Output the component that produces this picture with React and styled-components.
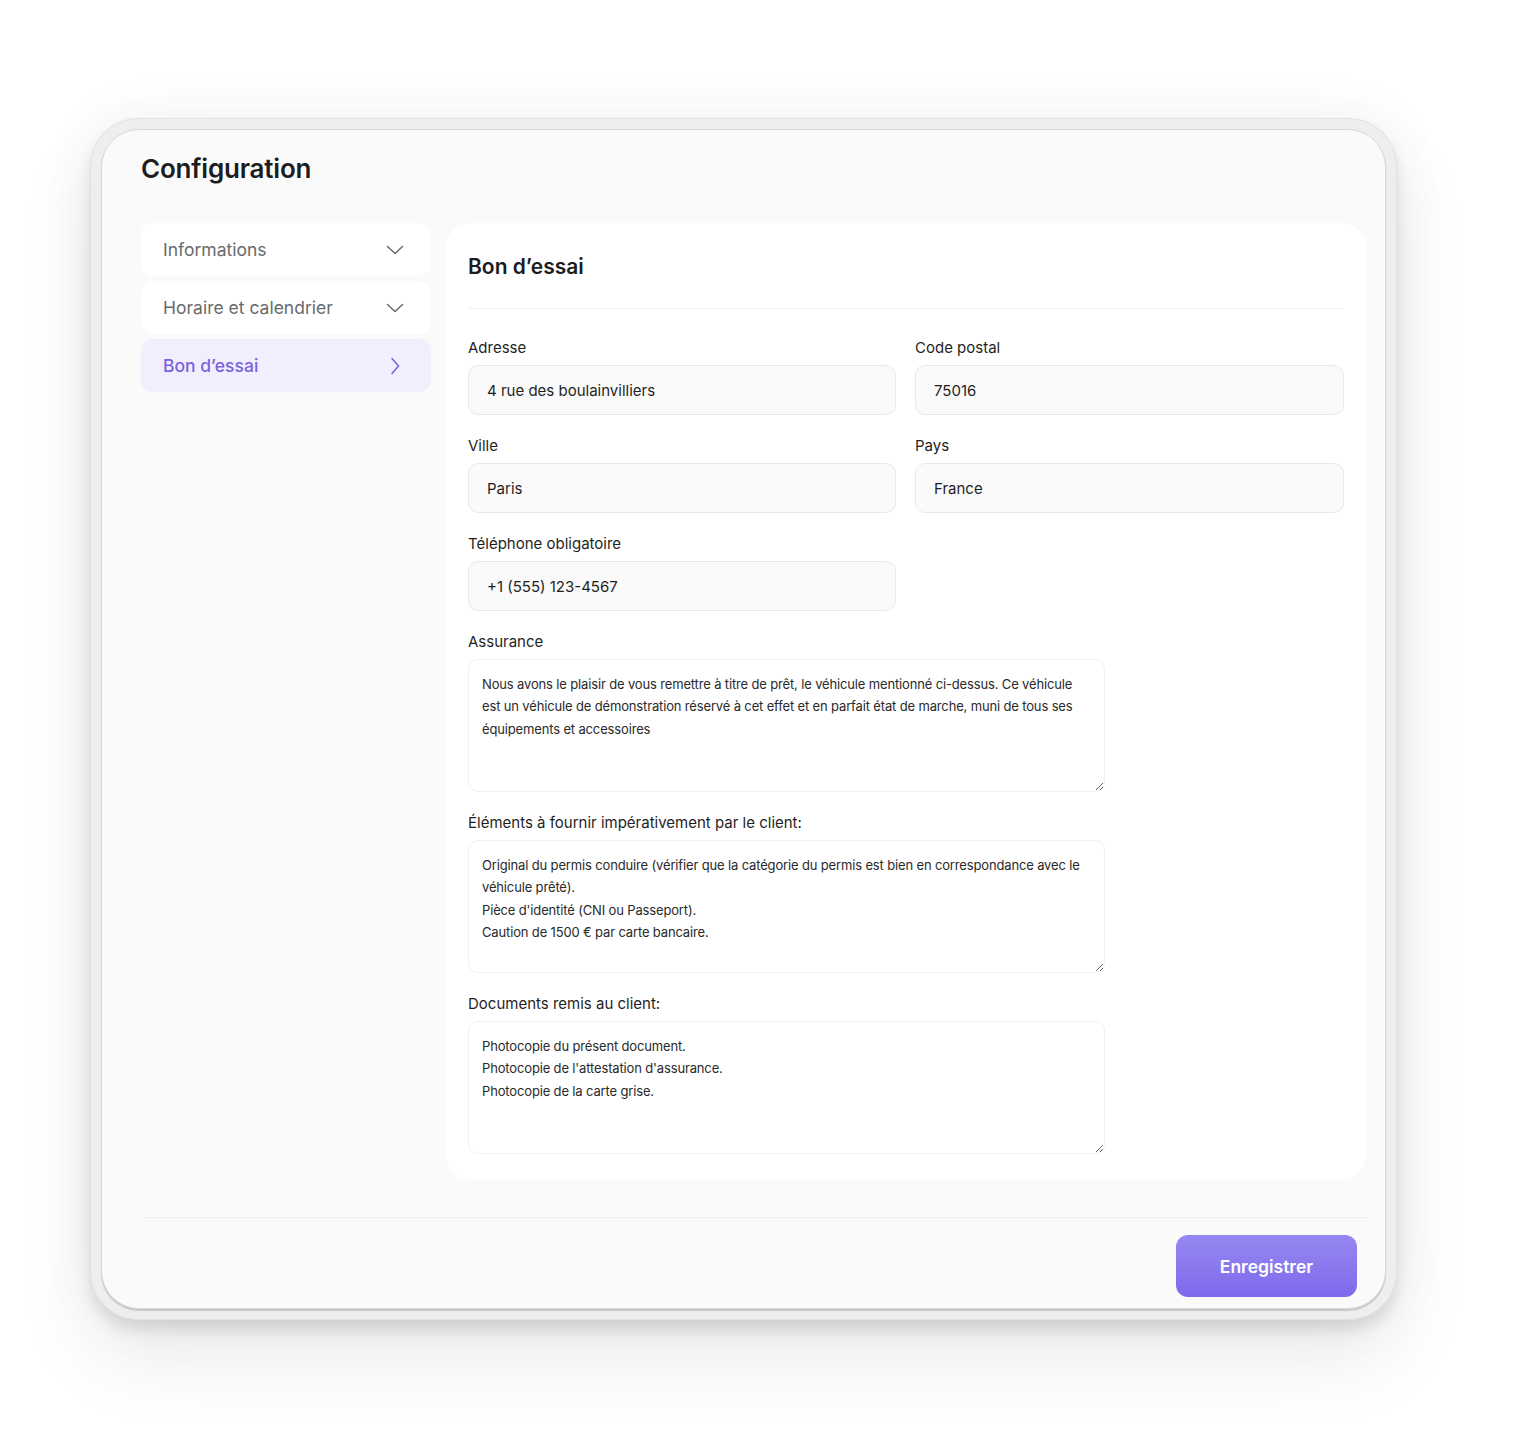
import styled, { createGlobalStyle } from "styled-components";

const GlobalStyle = createGlobalStyle`
  body {
    margin: 0;
    background: #ffffff;
    font-family: Inter, "Noto Sans", sans-serif;
    color: #1f1f1f;
  }
`;

const Page = styled.div`
  min-height: 1440px;
  padding: 118px 0 0 90px;
  box-sizing: border-box;
`;

const Frame = styled.div`
  width: 1307px;
  box-sizing: border-box;
  padding: 10px;
  border-radius: 48px;
  background: #eeeeee;
  border: 1px solid #e2e2e2;
  box-shadow: 0 10px 14px rgba(0, 0, 0, 0.1), 0 40px 80px rgba(0, 0, 0, 0.08),
    0 0 60px rgba(0, 0, 0, 0.05);
`;

const Card = styled.div`
  height: 1180px;
  box-sizing: border-box;
  padding: 23px 18px 12px 39px;
  border-radius: 38px;
  background: #fafafa;
  border: 1px solid #d8d8d8;
  box-shadow: 0 2px 1px #c6c6c6;
  display: flex;
  flex-direction: column;
`;

const Title = styled.h1`
  margin: 0;
  font-size: 26px;
  line-height: 32px;
  font-weight: 600;
  color: #1d1d1d;
  letter-spacing: -0.2px;
`;

const Body = styled.div`
  display: flex;
  gap: 15px;
  margin-top: 38px;
  align-items: flex-start;
`;

const Sidebar = styled.nav`
  width: 290px;
  flex-shrink: 0;
  display: flex;
  flex-direction: column;
  gap: 5px;
`;

const NavItem = styled.div`
  height: 53px;
  display: flex;
  align-items: center;
  justify-content: space-between;
  padding: 0 26px 0 22px;
  border-radius: 12px;
  background: ${(p) => (p.$active ? "#f1eefd" : "#ffffff")};
  color: ${(p) => (p.$active ? "#7b62dd" : "#6a6a6a")};
  font-size: 17.5px;
  font-weight: ${(p) => (p.$active ? 500 : 400)};
  svg {
    stroke: ${(p) => (p.$active ? "#7b62dd" : "#6a6a6a")};
  }
`;

const Panel = styled.section`
  width: 920px;
  flex-shrink: 0;
  box-sizing: border-box;
  padding: 30px 22px 26px 22px;
  border-radius: 24px;
  background: #ffffff;
`;

const PanelTitle = styled.h2`
  margin: 0;
  font-size: 21px;
  line-height: 28px;
  font-weight: 600;
  color: #1d1d1d;
`;

const Divider = styled.div`
  height: 1px;
  background: #efefef;
  margin: ${(p) => p.$margin || "0"};
`;

const Grid = styled.div`
  display: grid;
  grid-template-columns: 428px 429px;
  column-gap: 19px;
  row-gap: 21px;
`;

const Field = styled.label`
  display: flex;
  flex-direction: column;
  gap: 7px;
  margin-top: ${(p) => p.$top || "0"};
`;

const Label = styled.span`
  font-size: 15px;
  line-height: 20px;
  color: #1f1f1f;
`;

const Input = styled.input`
  height: 50px;
  box-sizing: border-box;
  padding: 0 18px;
  border-radius: 10px;
  border: 1px solid #e9e9e9;
  background: #fafafa;
  font-family: Inter, "Noto Sans", sans-serif;
  font-size: 15px;
  color: #1f1f1f;
  outline: none;
`;

const TextArea = styled.textarea`
  width: 637px;
  height: 133px;
  box-sizing: border-box;
  padding: 13px 13px;
  border-radius: 10px;
  border: 1px solid #f0f0f0;
  background: #ffffff;
  font-family: Inter, "Noto Sans", sans-serif;
  font-size: 13px;
  line-height: 22.4px;
  letter-spacing: -0.15px;
  color: #2a2a2a;
  outline: none;
  resize: vertical;
  overflow: hidden;
`;

const Footer = styled.div`
  margin-top: 37px;
  display: flex;
  flex-direction: column;
`;

const Actions = styled.div`
  display: flex;
  justify-content: flex-end;
  padding: 17px 10px 0 0;
`;

const SaveButton = styled.button`
  width: 181px;
  height: 62px;
  border: none;
  border-radius: 12px;
  background: linear-gradient(180deg, #9688f1 0%, #7e69ec 100%);
  color: #ffffff;
  font-family: Inter, "Noto Sans", sans-serif;
  font-size: 17.5px;
  font-weight: 600;
  cursor: pointer;
`;

const ChevronDown = () => (
  <svg width="20" height="20" viewBox="0 0 20 20" fill="none" strokeWidth="1.5" strokeLinecap="round" strokeLinejoin="round">
    <path d="M2.5 6.5 10 13.5l7.5-7" />
  </svg>
);

const ChevronRight = () => (
  <svg width="20" height="20" viewBox="0 0 20 20" fill="none" strokeWidth="1.5" strokeLinecap="round" strokeLinejoin="round">
    <path d="M7 2.5 13.5 10 7 17.5" />
  </svg>
);

const navItems = [
  { label: "Informations", active: false },
  { label: "Horaire et calendrier", active: false },
  { label: "Bon d’essai", active: true },
];

const textFields = [
  { label: "Adresse", value: "4 rue des boulainvilliers" },
  { label: "Code postal", value: "75016" },
  { label: "Ville", value: "Paris" },
  { label: "Pays", value: "France" },
  { label: "Téléphone obligatoire", value: "+1 (555) 123-4567" },
];

const areas = [
  {
    label: "Assurance",
    value:
      "Nous avons le plaisir de vous remettre à titre de prêt, le véhicule mentionné ci-dessus. Ce véhicule est un véhicule de démonstration réservé à cet effet et en parfait état de marche, muni de tous ses équipements et accessoires",
  },
  {
    label: "Éléments à fournir impérativement par le client:",
    value:
      "Original du permis conduire (vérifier que la catégorie du permis est bien en correspondance avec le véhicule prêté).\nPièce d'identité (CNI ou Passeport).\nCaution de 1500 € par carte bancaire.",
  },
  {
    label: "Documents remis au client:",
    value:
      "Photocopie du présent document.\nPhotocopie de l'attestation d'assurance.\nPhotocopie de la carte grise.",
  },
];

export default function App() {
  return (
    <Page>
      <GlobalStyle />
      <Frame>
        <Card>
          <Title>Configuration</Title>
          <Body>
            <Sidebar>
              {navItems.map((item) => (
                <NavItem key={item.label} $active={item.active}>
                  {item.label}
                  {item.active ? <ChevronRight /> : <ChevronDown />}
                </NavItem>
              ))}
            </Sidebar>
            <Panel>
              <PanelTitle>Bon d’essai</PanelTitle>
              <Divider $margin="27px 0 29px" />
              <Grid>
                {textFields.map((f) => (
                  <Field key={f.label}>
                    <Label>{f.label}</Label>
                    <Input readOnly defaultValue={f.value} />
                  </Field>
                ))}
              </Grid>
              {areas.map((a) => (
                <Field key={a.label} $top="21px">
                  <Label>{a.label}</Label>
                  <TextArea readOnly defaultValue={a.value} />
                </Field>
              ))}
            </Panel>
          </Body>
          <Footer>
            <Divider />
            <Actions>
              <SaveButton>Enregistrer</SaveButton>
            </Actions>
          </Footer>
        </Card>
      </Frame>
    </Page>
  );
}
